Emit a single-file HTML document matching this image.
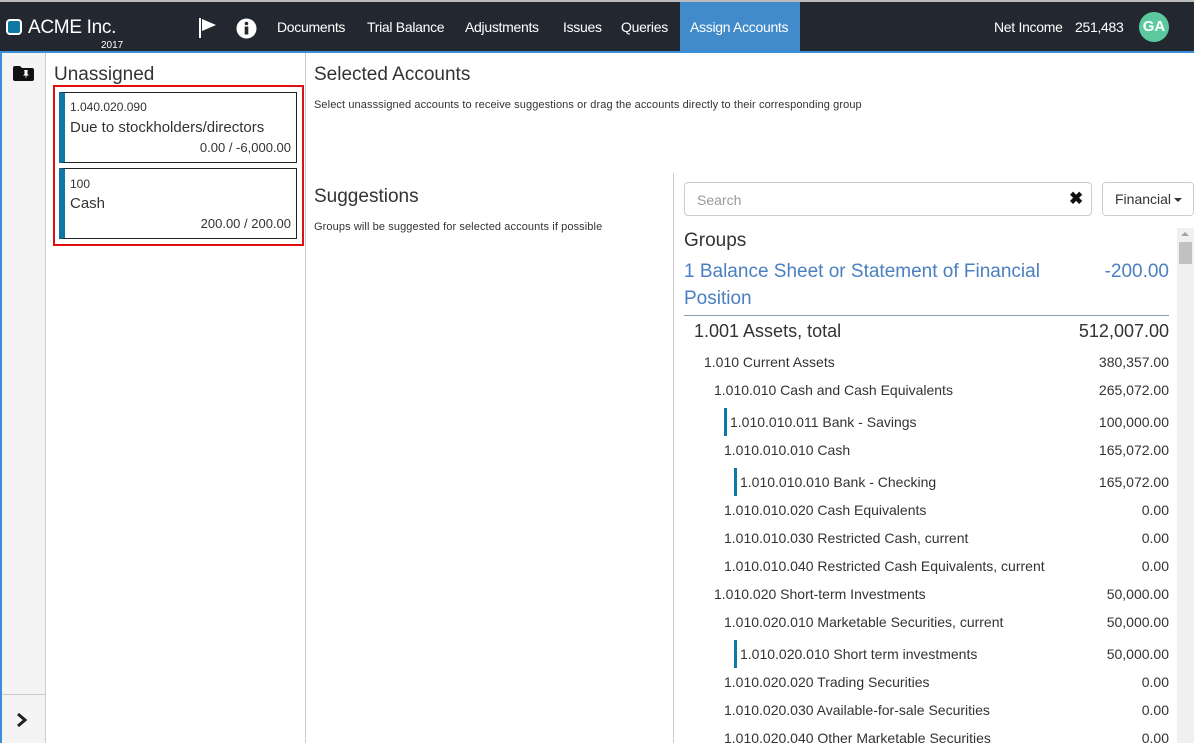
<!DOCTYPE html>
<html><head><meta charset="utf-8"><style>
*{margin:0;padding:0;box-sizing:border-box}
body{width:1194px;height:743px;overflow:hidden;font-family:"Liberation Sans",sans-serif;color:#333;background:#fff;position:relative}
.a{position:absolute;white-space:nowrap}
.nav{position:absolute;left:0;top:0;width:1194px;height:53px;background:#232830;border-top:2px solid #bbb;border-bottom:2px solid #3a8fd8}
.nav .t{position:absolute;top:17px;color:#fff;font-size:14px;letter-spacing:-0.3px}
.card{position:absolute;left:59px;width:238px;border:1px solid #222;border-left:6px solid #0e77a5;background:#fff}
.r{position:absolute;font-size:14px;color:#333;white-space:nowrap}
.v{position:absolute;right:25px;font-size:14px;color:#333}
.bar{position:absolute;width:3px;height:28px;background:#0e77a5}
</style></head><body>
<div class="nav">
  <div class="a" style="left:6px;top:17px;width:16px;height:16px;border:2px solid #fff;border-radius:4px;background:#0e77a5"></div>
  <div class="a" style="left:28px;top:15px;color:#fff;font-size:19px;letter-spacing:-0.3px">ACME Inc.</div>
  <div class="a" style="left:101px;top:38px;color:#fff;font-size:10px">2017</div>
  <svg class="a" style="left:198px;top:15px" width="20" height="22" viewBox="0 0 20 22"><rect x="1" y="1" width="2" height="20" fill="#fff"/><path d="M4 2 L18 8 L4 14 Z" fill="#fff"/></svg>
  <svg class="a" style="left:236px;top:16px" width="21" height="21" viewBox="0 0 21 21"><circle cx="10.5" cy="10.5" r="10" fill="#fff"/><circle cx="10.5" cy="5.5" r="1.8" fill="#232830"/><rect x="8.7" y="8.5" width="3.6" height="8" fill="#232830"/></svg>
  <div class="t" style="left:277px">Documents</div>
  <div class="t" style="left:367px">Trial Balance</div>
  <div class="t" style="left:465px">Adjustments</div>
  <div class="t" style="left:563px">Issues</div>
  <div class="t" style="left:621px">Queries</div>
  <div class="a" style="left:680px;top:0;width:120px;height:49px;background:#428bca"></div>
  <div class="t" style="left:690px">Assign Accounts</div>
  <div class="t" style="left:994px">Net Income</div>
  <div class="t" style="left:1075px">251,483</div>
  <div class="a" style="left:1139px;top:10px;width:30px;height:30px;border-radius:50%;background:#5cc8a0;color:#fff;font-size:15px;font-weight:bold;text-align:center;line-height:30px">GA</div>
</div>
<div class="a" style="left:0;top:53px;width:2px;height:690px;background:#3a8fd8"></div>
<div class="a" style="left:2px;top:53px;width:44px;height:690px;background:#f4f4f4;border-right:1px solid #ccc"></div>
<div class="a" style="left:2px;top:694px;width:44px;height:1px;background:#ccc"></div>
<svg class="a" style="left:13px;top:66px" width="21" height="15" viewBox="0 0 21 15"><path d="M0 2 Q0 0 2 0 L7 0 L9 2 L19 2 Q21 2 21 4 L21 13 Q21 15 19 15 L2 15 Q0 15 0 13Z" fill="#111"/><path d="M11 4 L15 4 L14.5 5 L14.5 8 L16 9.5 L13.6 9.5 L13 13 L12.4 9.5 L10 9.5 L11.5 8 L11.5 5Z" fill="#fff"/></svg>
<svg class="a" style="left:16px;top:713px" width="12" height="14" viewBox="0 0 12 14"><path d="M2 1 L9 7 L2 13" stroke="#222" stroke-width="3" fill="none"/></svg>
<div class="a" style="left:305px;top:53px;width:1px;height:690px;background:#ccc"></div>
<div class="a" style="left:673px;top:173px;width:1px;height:570px;background:#ccc"></div>

<div class="a" style="left:54px;top:64px;font-size:19px;color:#333">Unassigned</div>
<div class="a" style="left:53px;top:85px;width:251px;height:161px;border:2px solid #e01010"></div>
<div class="card" style="top:92px;height:71px">
  <div class="a" style="left:5px;top:7px;font-size:12px">1.040.020.090</div>
  <div class="a" style="left:5px;top:26px;font-size:15px">Due to stockholders/directors</div>
  <div class="a" style="right:5px;top:47px;font-size:13px">0.00 / -6,000.00</div>
</div>
<div class="card" style="top:168px;height:71px">
  <div class="a" style="left:5px;top:8px;font-size:12px">100</div>
  <div class="a" style="left:5px;top:26px;font-size:15px">Cash</div>
  <div class="a" style="right:5px;top:47px;font-size:13px">200.00 / 200.00</div>
</div>

<div class="a" style="left:314px;top:64px;font-size:19px">Selected Accounts</div>
<div class="a" style="left:314px;top:99px;font-size:11px;letter-spacing:0.1px">Select unasssigned accounts to receive suggestions or drag the accounts directly to their corresponding group</div>
<div class="a" style="left:314px;top:186px;font-size:19px">Suggestions</div>
<div class="a" style="left:314px;top:221px;font-size:11px;letter-spacing:0.1px">Groups will be suggested for selected accounts if possible</div>

<div class="a" style="left:684px;top:182px;width:408px;height:34px;border:1px solid #ccc;border-radius:4px"></div>
<div class="a" style="left:697px;top:192px;font-size:14px;color:#999">Search</div>
<div class="a" style="left:1069px;top:189px;font-size:17px;font-weight:bold;color:#111">✖</div>
<div class="a" style="left:1102px;top:182px;width:92px;height:34px;border:1px solid #ccc;border-radius:4px"></div>
<div class="a" style="left:1115px;top:191px;font-size:14px">Financial</div>
<div class="a" style="left:1174px;top:198px;border:4px solid transparent;border-top:4px solid #333;border-bottom:0"></div>

<div class="a" style="left:1177px;top:228px;width:17px;height:515px;background:#f0f0f0"></div>
<div class="a" style="left:1179px;top:242px;width:13px;height:22px;background:#c1c1c1"></div>
<div class="a" style="left:1181px;top:232px;border:4px solid transparent;border-bottom:4px solid #a3a3a3;border-top:0"></div>

<div class="a" style="left:684px;top:230px;font-size:19px">Groups</div>
<div class="a" style="left:684px;top:258px;font-size:19px;color:#4a7fc0;line-height:27px;white-space:normal;width:380px">1 Balance Sheet or Statement of Financial Position</div>
<div class="a" style="right:25px;top:261px;font-size:19px;color:#4a7fc0">-200.00</div>
<div class="a" style="left:684px;top:315px;width:485px;height:1px;background:#8a9cb0"></div>
<div class="r" style="left:694px;top:321px;font-size:18px">1.001 Assets, total</div><div class="v" style="top:321px;font-size:18px">512,007.00</div>

<div class="r" style="left:704px;top:354px">1.010 Current Assets</div><div class="v" style="top:354px">380,357.00</div>
<div class="r" style="left:714px;top:382px">1.010.010 Cash and Cash Equivalents</div><div class="v" style="top:382px">265,072.00</div>
<div class="bar" style="left:724px;top:408px"></div><div class="r" style="left:730px;top:414px">1.010.010.011 Bank - Savings</div><div class="v" style="top:414px">100,000.00</div>
<div class="r" style="left:724px;top:442px">1.010.010.010 Cash</div><div class="v" style="top:442px">165,072.00</div>
<div class="bar" style="left:734px;top:468px"></div><div class="r" style="left:740px;top:474px">1.010.010.010 Bank - Checking</div><div class="v" style="top:474px">165,072.00</div>
<div class="r" style="left:724px;top:502px">1.010.010.020 Cash Equivalents</div><div class="v" style="top:502px">0.00</div>
<div class="r" style="left:724px;top:530px">1.010.010.030 Restricted Cash, current</div><div class="v" style="top:530px">0.00</div>
<div class="r" style="left:724px;top:558px">1.010.010.040 Restricted Cash Equivalents, current</div><div class="v" style="top:558px">0.00</div>
<div class="r" style="left:714px;top:586px">1.010.020 Short-term Investments</div><div class="v" style="top:586px">50,000.00</div>
<div class="r" style="left:724px;top:614px">1.010.020.010 Marketable Securities, current</div><div class="v" style="top:614px">50,000.00</div>
<div class="bar" style="left:734px;top:640px"></div><div class="r" style="left:740px;top:646px">1.010.020.010 Short term investments</div><div class="v" style="top:646px">50,000.00</div>
<div class="r" style="left:724px;top:674px">1.010.020.020 Trading Securities</div><div class="v" style="top:674px">0.00</div>
<div class="r" style="left:724px;top:702px">1.010.020.030 Available-for-sale Securities</div><div class="v" style="top:702px">0.00</div>
<div class="r" style="left:724px;top:730px">1.010.020.040 Other Marketable Securities</div><div class="v" style="top:730px">0.00</div>
</body></html>
